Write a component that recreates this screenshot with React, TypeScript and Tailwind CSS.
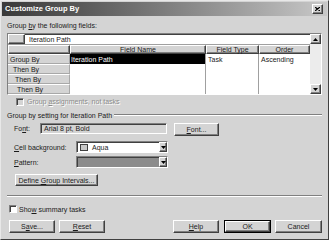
import React from "react";

const raised =
  "border border-t-white border-l-white border-r-[#404040] border-b-[#404040] shadow-[inset_-1px_-1px_0_#808080] bg-[#d4d4d4]";
const sunken =
  "border border-t-[#808080] border-l-[#808080] border-r-white border-b-white shadow-[inset_1px_1px_0_#404040]";

function Down() {
  return (
    <svg width="5" height="3" viewBox="0 0 5 3">
      <path d="M0 0h5L2.5 3z" fill="#000" />
    </svg>
  );
}
function Up() {
  return (
    <svg width="5" height="3" viewBox="0 0 5 3">
      <path d="M0 3h5L2.5 0z" fill="#000" />
    </svg>
  );
}

function Btn({ children, w, cls = "" }: { children: React.ReactNode; w: string; cls?: string }) {
  return (
    <div className={`${raised} ${w} h-[13px] flex items-center justify-center shrink-0 whitespace-nowrap ${cls}`}>
      <span>{children}</span>
    </div>
  );
}

function Check({ disabled = false }: { disabled?: boolean }) {
  return (
    <div className={`w-[8px] h-[8px] shrink-0 ${sunken} ${disabled ? "bg-[#d4d4d4]" : "bg-white"}`} />
  );
}

const rowHeads = [
  { t: "Group By", pl: "pl-[2px]" },
  { t: "Then By", pl: "pl-[5px]" },
  { t: "Then By", pl: "pl-[7px]" },
  { t: "Then By", pl: "pl-[9px]" },
];

export default function App() {
  return (
    <div className="w-[329px] h-[240px] bg-[#d4d4d4] font-['Liberation_Sans',Arial,sans-serif] text-[7px] leading-none text-[#1a1a1a] border border-t-[#e8e8e8] border-l-[#e8e8e8] border-r-[#404040] border-b-[#404040] p-px flex flex-col overflow-hidden whitespace-nowrap">
      {/* Title bar */}
      <div className="h-[14px] shrink-0 bg-linear-to-r from-[#3a3a3a] to-[#c8c8c8] flex items-center justify-between pl-[3px] pr-[4px]">
        <span className="text-white font-bold text-[7.5px]">Customize Group By</span>
        <div className={`${raised} w-[11px] h-[10px] flex items-center justify-center`}>
          <svg width="5" height="4" viewBox="0 0 5 4">
            <path d="M0 0L5 4M5 0L0 4" stroke="#000" strokeWidth="1.2" />
          </svg>
        </div>
      </div>

      <div className="flex flex-col pl-[5px]">
        <div className="mt-[4px] h-[10px] flex items-center">
          <span>
            Group <span className="underline">b</span>y the following fields:
          </span>
        </div>

        {/* Grid */}
        <div className={`mt-[3px] w-[315px] h-[62px] ${sunken} bg-white flex overflow-hidden`}>
          <div className="w-[302px] flex flex-col shrink-0">
            <div className="h-[11px] flex border-b border-[#a0a0a0] shrink-0">
              <div className={`w-[17px] h-full ${raised}`} />
              <div className="flex-1 flex items-center pl-[4px]">
                <span>Iteration Path</span>
              </div>
            </div>
            <div className="h-[9px] flex shrink-0">
              <div className={`w-[62px] h-full ${raised}`} />
              <div className={`w-[136px] h-full ${raised} flex items-center justify-center`}>
                <span>Field Name</span>
              </div>
              <div className={`w-[53px] h-full ${raised} flex items-center justify-center`}>
                <span>Field Type</span>
              </div>
              <div className={`w-[51px] h-full ${raised} flex items-center justify-center`}>
                <span>Order</span>
              </div>
            </div>
            <div className="flex flex-1">
              <div className="w-[62px] flex flex-col shrink-0">
                {rowHeads.map((r, i) => (
                  <div
                    key={i}
                    className={`h-[10px] shrink-0 bg-[#d4d4d4] border-b border-r border-[#a8a8a8] border-t border-t-white flex items-center ${r.pl}`}
                  >
                    <span>{r.t}</span>
                  </div>
                ))}
              </div>
              <div className="w-[136px] flex flex-col border-r border-[#a0a0a0] shrink-0">
                <div className="h-[10px] bg-black text-white flex items-center pl-[1px]">
                  <span>Iteration Path</span>
                </div>
              </div>
              <div className="w-[53px] flex flex-col border-r border-[#a0a0a0] shrink-0">
                <div className="h-[10px] flex items-center pl-[2px]">
                  <span>Task</span>
                </div>
              </div>
              <div className="w-[51px] flex flex-col shrink-0">
                <div className="h-[10px] flex items-center pl-[2px]">
                  <span>Ascending</span>
                </div>
              </div>
            </div>
          </div>
          <div className="flex-1 bg-[#ececec] flex flex-col justify-between">
            <div className={`${raised} h-[10px] flex items-center justify-center`}>
              <Up />
            </div>
            <div className={`${raised} h-[10px] flex items-center justify-center`}>
              <Down />
            </div>
          </div>
        </div>

        {/* Group assignments */}
        <div className="mt-[2px] h-[9px] flex items-center pl-[9px] gap-[3px]">
          <Check disabled />
          <span className="text-[#8c8c8c] [text-shadow:1px_1px_0_#fff]">
            Group <span className="underline">a</span>ssignments, not tasks
          </span>
        </div>

        {/* Section header */}
        <div className="mt-[4px] h-[10px] w-[315px] flex items-center gap-[2px]">
          <span>Group by setting for Iteration Path</span>
          <div className="flex-1 h-[2px] border-t border-[#808080] border-b border-b-white" />
        </div>

        {/* Font */}
        <div className="mt-[3px] h-[13px] flex items-start pl-[7px]">
          <div className="w-[26px] h-[11px] flex items-center">
            <span>
              Fo<span className="underline">n</span>t:
            </span>
          </div>
          <div className={`w-[127px] h-[11px] ${sunken} bg-[#d4d4d4] flex items-center pl-[3px]`}>
            <span>Arial 8 pt, Bold</span>
          </div>
          <Btn w="w-[45px]" cls="ml-[7px]">
            <span className="underline">F</span>ont...
          </Btn>
        </div>

        {/* Cell background */}
        <div className="mt-[5px] h-[12px] flex items-center pl-[7px]">
          <div className="w-[62px]">
            <span className="underline">C</span>ell background:
          </div>
          <div className={`w-[92px] h-[12px] ${sunken} bg-white flex items-center`}>
            <div className="w-[8px] h-[7px] ml-[3px] bg-[#c8c8c8] border border-[#404040]" />
            <span className="ml-[4px] flex-1">Aqua</span>
            <div className={`${raised} w-[8px] h-full flex items-center justify-center`}>
              <Down />
            </div>
          </div>
        </div>

        {/* Pattern */}
        <div className="mt-[3px] h-[12px] flex items-center pl-[7px]">
          <div className="w-[62px]">
            <span className="underline">P</span>attern:
          </div>
          <div className={`w-[92px] h-[12px] ${sunken} bg-[#8c8c8c] flex items-center justify-end`}>
            <div className={`${raised} w-[8px] h-full flex items-center justify-center`}>
              <Down />
            </div>
          </div>
        </div>

        {/* Define Group Intervals */}
        <div className="mt-[6px] h-[12px] flex pl-[8px]">
          <div className={`${raised} w-[83px] h-[12px] flex items-center justify-center`}>
            <span>
              Define <span className="underline">G</span>roup Intervals...
            </span>
          </div>
        </div>

        {/* Separator */}
        <div className="mt-[9px] w-[315px] h-[2px] border-t border-[#808080] border-b border-b-white" />

        {/* Show summary tasks */}
        <div className="mt-[8px] h-[8px] flex items-center pl-[2px] gap-[2px]">
          <Check />
          <span>
            Sho<span className="underline">w</span> summary tasks
          </span>
        </div>

        {/* Buttons */}
        <div className="mt-[7px] h-[13px] flex items-center pl-[2px]">
          <Btn w="w-[46px]">
            S<span className="underline">a</span>ve...
          </Btn>
          <Btn w="w-[46px]" cls="ml-[4px]">
            <span className="underline">R</span>eset
          </Btn>
          <Btn w="w-[46px]" cls="ml-[68px]">
            <span className="underline">H</span>elp
          </Btn>
          <div className="ml-[5px] w-[47px] h-[13px] border border-black shrink-0">
            <div className={`${raised} w-full h-full flex items-center justify-center`}>
              <span>OK</span>
            </div>
          </div>
          <Btn w="w-[47px]" cls="ml-[4px]">
            Cancel
          </Btn>
        </div>
      </div>
    </div>
  );
}
